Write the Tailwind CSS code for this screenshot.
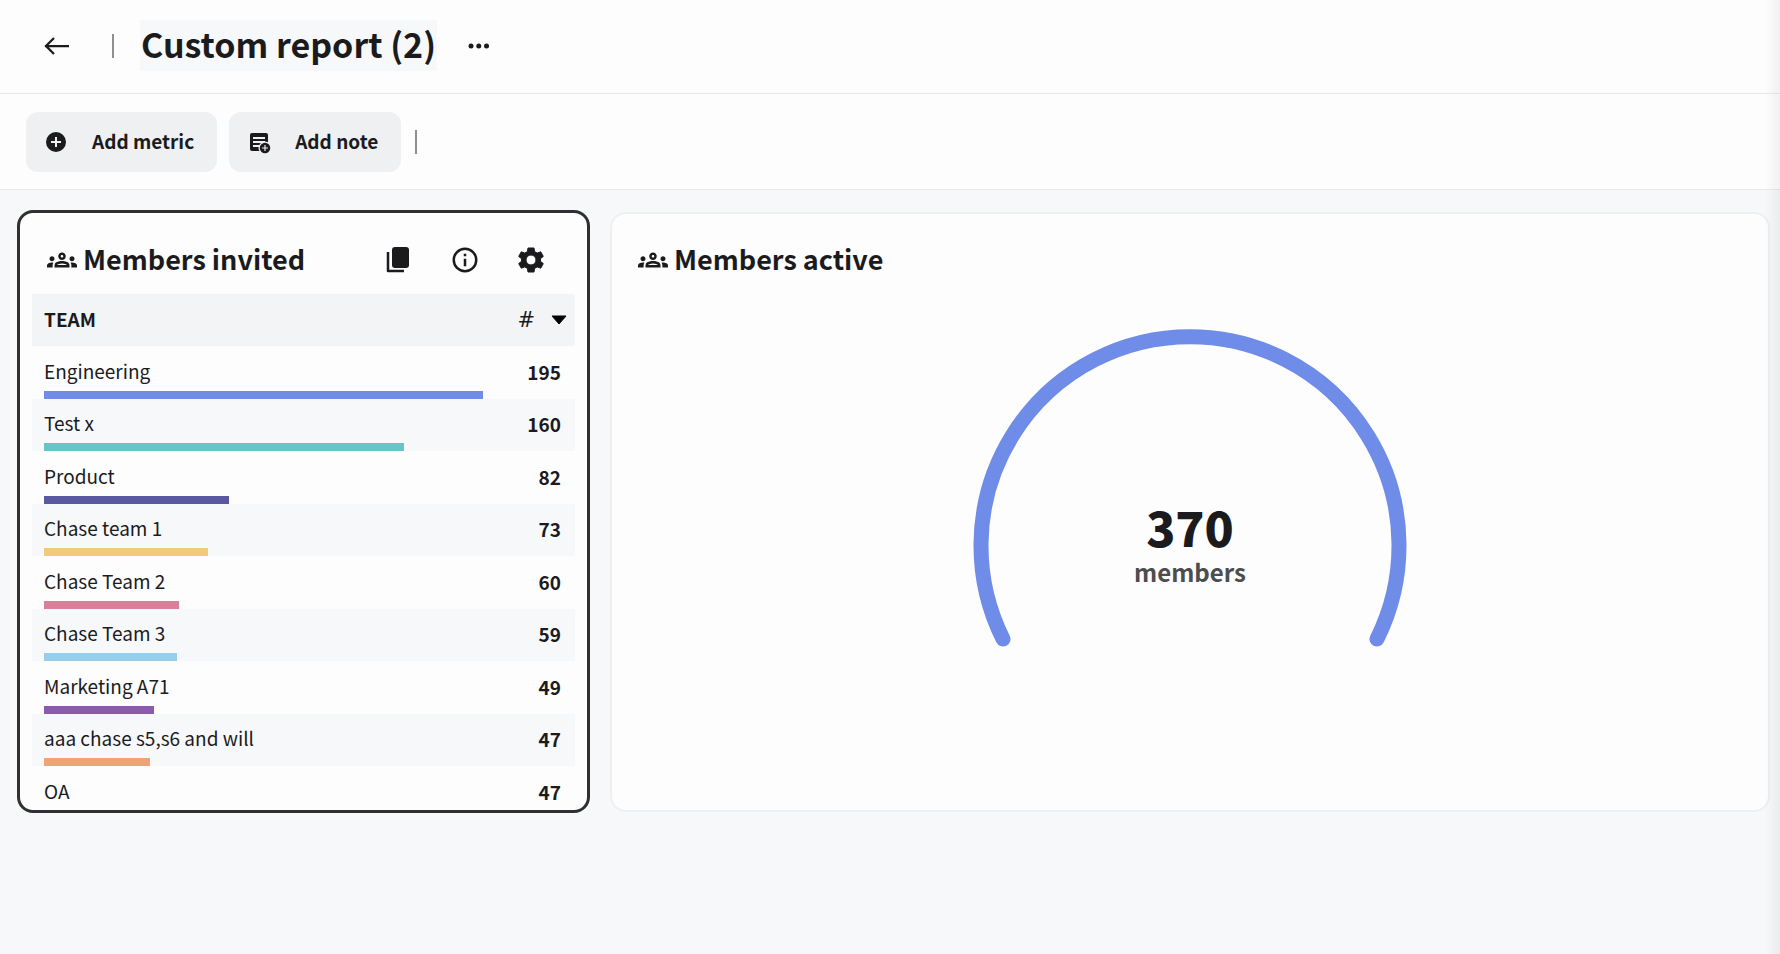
<!DOCTYPE html>
<html lang="en">
<head>
  <meta charset="UTF-8">
  <meta name="viewport" content="width=device-width, initial-scale=1.0">
  <title>Custom report (2)</title>
  <script src="https://cdn.jsdelivr.net/npm/@tailwindcss/browser@4"></script>
</head>
<body class="relative min-h-screen bg-[#f7f8fa] text-[#1b1b1d] font-['Noto_Sans_CJK_SC',sans-serif]">
  <svg class="hidden">
    <symbol id="icon-groups" viewBox="0 0 24 24">
      <path fill="currentColor" d="M4 13c1.1 0 2-.9 2-2s-.9-2-2-2-2 .9-2 2 .9 2 2 2zm1.13 1.1C4.76 14.04 4.39 14 4 14c-.99 0-1.93.21-2.78.58A2.01 2.01 0 0 0 0 16.43V18h4.5v-1.61c0-.83.23-1.61.63-2.29zM20 13c1.1 0 2-.9 2-2s-.9-2-2-2-2 .9-2 2 .9 2 2 2zm4 3.43c0-.81-.48-1.53-1.22-1.85A6.95 6.95 0 0 0 20 14c-.39 0-.76.04-1.13.1.4.68.63 1.46.63 2.29V18H24v-1.57zm-7.76-2.78C15.07 13.13 13.63 12.75 12 12.75s-3.07.39-4.24.9A2.99 2.99 0 0 0 6 16.39V18h12v-1.61c0-1.18-.68-2.26-1.76-2.74zM8.07 16c.09-.23.13-.39.91-.69.97-.38 1.99-.56 3.02-.56s2.05.18 3.02.56c.77.3.81.46.91.69H8.07zM12 8c.55 0 1 .45 1 1s-.45 1-1 1-1-.45-1-1 .45-1 1-1m0-2c-1.66 0-3 1.34-3 3s1.34 3 3 3 3-1.34 3-3-1.34-3-3-3z"/>
    </symbol>
  </svg>

  <header class="flex items-center h-[94px] pl-[42px] pb-[2px] bg-[#fdfdfd] border-b border-[#e8e9eb]">
    <button aria-label="Back" class="w-7 h-7">
      <svg viewBox="0 0 28 28" class="w-7 h-7" fill="none" stroke="currentColor" stroke-width="2.25"><path d="M27 14H3M12 6l-8 8 8 8"/></svg>
    </button>
    <div class="w-[2px] h-6 bg-[#8e8f91] ml-[42px]"></div>
    <h1 class="ml-[26px] px-px h-[51px] leading-[48px] text-[34px] font-bold bg-[#f7f8fa] whitespace-nowrap">Custom report (2)</h1>
    <button aria-label="More" class="ml-[31px]">
      <svg viewBox="0 0 22 6" class="w-[22px] h-[6px]" fill="currentColor"><circle cx="3" cy="3" r="2.5"/><circle cx="10.75" cy="3" r="2.5"/><circle cx="18.5" cy="3" r="2.5"/></svg>
    </button>
  </header>

  <div class="flex items-center gap-3 h-24 pl-[26px] bg-[#fdfdfd] border-b border-[#e8e9eb]">
    <button class="flex items-center gap-6 h-[60px] pl-[18px] pr-[23px] rounded-xl bg-[#eff0f2] text-[19px] font-bold whitespace-nowrap">
      <svg viewBox="0 0 24 24" class="w-6 h-6"><path fill="currentColor" d="M12 2a10 10 0 1 0 0 20 10 10 0 0 0 0-20zm5 11h-4v4h-2v-4H7v-2h4V7h2v4h4v2z"/></svg>
      Add metric
    </button>
    <button class="flex items-center gap-6 h-[60px] pl-[18px] pr-[23px] rounded-xl bg-[#eff0f2] text-[19px] font-bold whitespace-nowrap">
      <svg viewBox="0 0 24 24" class="w-6 h-6">
        <path fill="currentColor" d="M5 3h14a2 2 0 0 1 2 2v16H5a2 2 0 0 1-2-2V5a2 2 0 0 1 2-2z"/>
        <path stroke="#eff0f2" stroke-width="2" d="M6 8h12M6 12h12M6 16h7"/>
        <circle cx="18" cy="18" r="6.5" fill="#eff0f2"/>
        <circle cx="18" cy="18" r="5.25" fill="currentColor"/>
        <path stroke="#eff0f2" stroke-width="1.2" d="M18 15v6M15 18h6"/>
      </svg>
      Add note
    </button>
    <div class="w-[2px] h-6 bg-[#8e8f91] ml-[2px]"></div>
  </div>

  <main class="grid grid-cols-[573fr_1160fr] gap-5 pl-[17px] pr-[10px] pt-5">
    <section class="flex flex-col h-[603px] px-3 border-3 border-[#303032] rounded-2xl bg-[#fdfdfd] overflow-hidden">
      <div class="flex items-center shrink-0 h-[81px] pt-[13px] pl-[15px] pr-[29px]">
        <svg class="w-[30px] h-[30px] mr-[6px]"><use href="#icon-groups"/></svg>
        <h2 class="grow text-[27px] leading-8 pb-[2px] font-bold whitespace-nowrap">Members invited</h2>
        <div class="flex gap-9">
          <button aria-label="Duplicate"><svg viewBox="0 0 30 30" class="w-[30px] h-[30px]"><rect x="8" y="2" width="17" height="21" rx="3" fill="currentColor"/><path d="M4 7v19h16" fill="none" stroke="currentColor" stroke-width="2.5" stroke-linejoin="round"/></svg></button>
          <button aria-label="Info"><svg viewBox="0 0 24 24" class="w-[30px] h-[30px]"><path fill="currentColor" d="M11 7h2v2h-2zm0 4h2v6h-2zm1-9a10 10 0 1 0 0 20 10 10 0 0 0 0-20zm0 18a8 8 0 1 1 0-16 8 8 0 0 1 0 16z"/></svg></button>
          <button aria-label="Settings"><svg viewBox="0 0 30 30" class="w-[30px] h-[30px]"><path fill="currentColor" fill-rule="evenodd" stroke="currentColor" stroke-linejoin="round" d="M12 3h6l.6 3.600 2.600 1.500 3.500-1.300 2.600 4.600-2.800 2.300v2.600l2.800 2.300-2.600 4.600-3.500-1.300-2.600 1.500L18 27h-6l-.6-3.600-2.600-1.500-3.500 1.300-2.600-4.600 2.800-2.300v-2.600l-2.800-2.300 2.600-4.600 3.500 1.300 2.600-1.500zM15 10a5 5 0 1 0 0 10 5 5 0 0 0 0-10z"/></svg></button>
        </div>
      </div>
      <table class="w-full table-fixed border-collapse text-[19px] leading-6">
        <colgroup><col><col class="w-[92px]"></colgroup>
        <thead>
          <tr class="h-[52px] bg-[#f3f4f6]">
            <th class="pl-3 pb-[2px] text-left font-bold">TEAM</th>
            <th class="pr-2">
              <button class="flex items-center justify-end gap-4 w-full text-[21px] font-normal font-['DejaVu_Sans',sans-serif]">#
                <svg viewBox="0 0 16 10" class="w-4 h-[10px]"><path fill="#000" stroke="#000" stroke-width="1" stroke-linejoin="round" d="M1 1h14L8 9z"/></svg>
              </button>
            </th>
          </tr>
        </thead>
        <tbody id="teams"></tbody>
      </table>
    </section>

    <section class="flex flex-col h-[600px] mt-[2px] border-2 border-[#eeeff1] rounded-2xl bg-[#fdfdfd] overflow-hidden">
      <div class="flex items-center h-20 pt-[11px] pl-[26px]">
        <svg class="w-[30px] h-[30px] mr-[6px]"><use href="#icon-groups"/></svg>
        <h2 class="text-[27px] leading-8 pb-[2px] font-bold whitespace-nowrap">Members active</h2>
      </div>
      <div class="relative self-center w-[434px] mt-[34px]">
        <svg viewBox="0 0 434 320" class="block w-full" role="img" aria-label="370 members">
          <path d="M30 311A209 209 0 1 1 404 311" fill="none" stroke="#6e8ce8" stroke-width="15" stroke-linecap="round"/>
        </svg>
        <div class="absolute inset-x-0 top-[170px] text-center">
          <div class="text-[48px] leading-[56px] font-black">370</div>
          <div class="text-[24px] leading-9 font-bold text-[#4d4d4f]">members</div>
        </div>
      </div>
    </section>
  </main>

  <div class="absolute inset-y-0 right-0 w-4 pointer-events-none bg-linear-to-r from-black/0 to-black/5"></div>

  <script>
    const teams = [
      ['Engineering', 195, '#6e8ce8'],
      ['Test x', 160, '#69c4c8'],
      ['Product', 82, '#5b589f'],
      ['Chase team 1', 73, '#f1ca7c'],
      ['Chase Team 2', 60, '#d77f9b'],
      ['Chase Team 3', 59, '#97cfeb'],
      ['Marketing A71', 49, '#8a5aae'],
      ['aaa chase s5,s6 and will', 47, '#f0a377'],
      ['OA', 47, '#6e8ce8'],
    ];
    const max = teams[0][1];
    document.getElementById('teams').innerHTML = teams.map(([name, count, color]) => `
      <tr class="h-[53px] even:h-[52px] even:bg-[#f7f8fa]">
        <td class="pl-3 p-0 align-bottom whitespace-nowrap">
          <div class="mb-2">${name}</div>
          <div class="h-2" style="width:${count / max * 100}%;background:${color}"></div>
        </td>
        <td class="pr-[14px] pb-[2px] text-right font-bold">${count}</td>
      </tr>`).join('');
  </script>
</body>
</html>
